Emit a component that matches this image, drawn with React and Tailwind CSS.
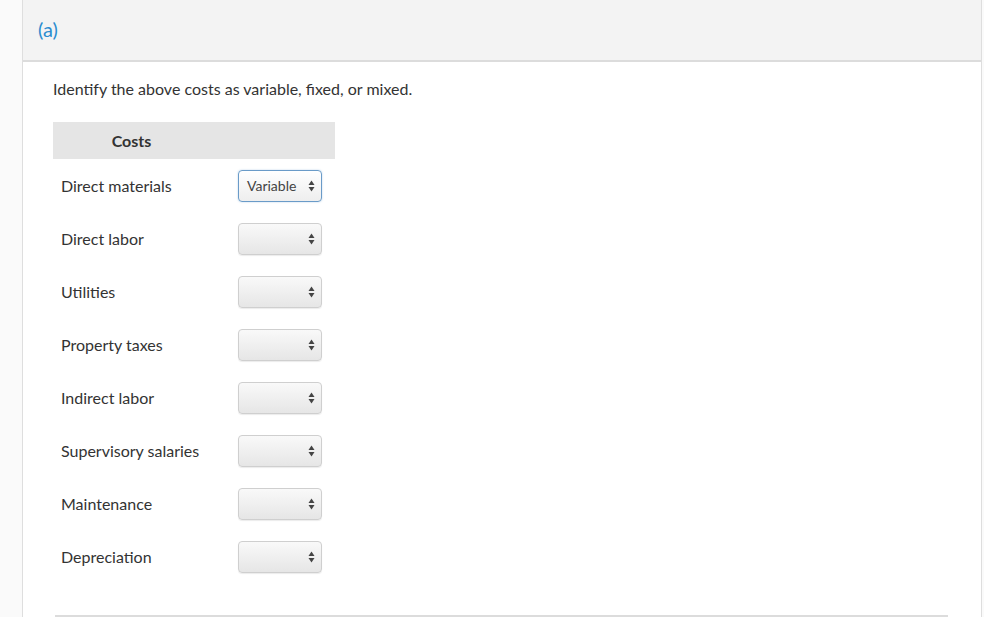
import React from "react";

const rows = [
  ["Direct materials", "Variable"],
  ["Direct labor", ""],
  ["Utilities", ""],
  ["Property taxes", ""],
  ["Indirect labor", ""],
  ["Supervisory salaries", ""],
  ["Maintenance", ""],
  ["Depreciation", ""],
];

function Arrows() {
  return (
    <svg width="7" height="12" viewBox="0 0 7 12" className="shrink-0">
      <path d="M3.5 0.5 L6.5 5 L0.5 5 Z" fill="#444" />
      <path d="M3.5 11.5 L6.5 7 L0.5 7 Z" fill="#444" />
    </svg>
  );
}

function Select({ value }) {
  const active = !!value;
  return (
    <div
      className={
        "w-[84px] h-[32px] rounded-[4px] flex items-center justify-between pl-[8px] pr-[6px] " +
        (active
          ? "border border-[#6a9bc8] bg-gradient-to-b from-[#ffffff] to-[#eeeeee] shadow-[0_0_2px_rgba(80,140,200,0.4)]"
          : "border border-[#cfcfcf] bg-gradient-to-b from-[#f9f9f9] to-[#e6e6e6] shadow-[0_1px_1px_rgba(0,0,0,0.08)]")
      }
    >
      <span className="text-[14px] text-[#444] leading-none">{value}</span>
      <Arrows />
    </div>
  );
}

export default function App() {
  return (
    <div
      className="w-[984px] h-[617px] overflow-hidden bg-[#fafafa] flex"
      style={{ fontFamily: "Lato, 'Open Sans', sans-serif" }}
    >
      <div className="w-[22px] shrink-0" />
      <div className="w-[960px] shrink-0 h-full bg-white border-l border-r border-[#dedede] flex flex-col">
        <div className="h-[62px] shrink-0 bg-[#f3f3f3] border-b-2 border-[#dcdcdc] flex items-center pl-[15px]">
          <span className="text-[20px] text-[#2b8ccf] leading-none -mt-[3px]">(a)</span>
        </div>
        <div className="pl-[30px] pr-[32px] pt-[17px] flex flex-col">
          <p className="text-[16px] text-[#333] leading-[19px]">
            Identify the above costs as variable, fixed, or mixed.
          </p>
          <div className="mt-[24px] w-[282px]">
            <div className="h-[37px] bg-[#e5e5e5] flex items-center">
              <div className="w-[156px] text-center font-bold text-[16px] text-[#333] pl-[1px]">Costs</div>
            </div>
            {rows.map(([label, val]) => (
              <div key={label} className="h-[53px] flex items-center">
                <div className="w-[156px] pl-[8px] text-[16px] text-[#333] pt-[1px]">{label}</div>
                <div className="pl-[29px]">
                  <Select value={val} />
                </div>
              </div>
            ))}
          </div>
          <div className="mt-[32px] ml-[2px] w-[893px] border-t-2 border-[#dcdcdc]" />
        </div>
      </div>
    </div>
  );
}
